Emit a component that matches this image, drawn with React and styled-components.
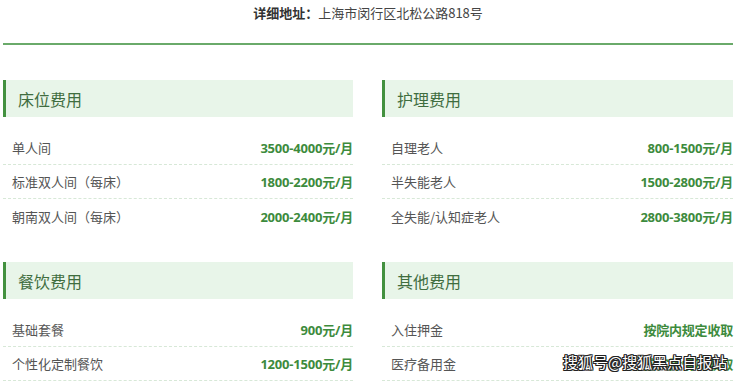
import React from 'react'
import styled, { createGlobalStyle } from 'styled-components'

const GlobalStyle = createGlobalStyle`
    html, body {
        margin: 0;
        padding: 0;
        background: #ffffff;
        font-family: "Noto Sans CJK SC", "Noto Sans", sans-serif;
    }
`

const Page = styled.div`
    position: relative;
    width: 740px;
    height: 381px;
    padding: 0 7px 0 3px;
    box-sizing: border-box;
    overflow: hidden;
`
const Address = styled.div`
    height: 43px;
    padding-top: 3px;
    box-sizing: border-box;
    text-align: center;
    font-size: 13px;
    line-height: 20px;
    color: #444;
    b {
        color: #333;
        font-weight: 700;
    }
`
const Divider = styled.div`
    height: 2px;
    background: #6aaa6a;
`
const Grid = styled.div`
    display: grid;
    grid-template-columns: 350px 351px;
    column-gap: 29px;
    row-gap: 29px;
    margin-top: 35px;
`
const SectionHeader = styled.div`
    height: 37px;
    display: flex;
    align-items: center;
    padding-left: 12px;
    background: #e8f5e9;
    border-left: 3px solid #43913f;
    font-size: 16px;
    color: #3f6d3f;
`
const Rows = styled.div`
    margin-top: 14px;
`
const Row = styled.div`
    height: 34px;
    display: flex;
    align-items: center;
    justify-content: space-between;
    padding-left: 9px;
    box-sizing: border-box;
    border-bottom: ${props => props.last ? 'none' : '1px dashed #d7e8d7'};
`
const Label = styled.span`
    font-size: 13px;
    color: #555;
`
const Value = styled.span`
    font-family: "Open Sans", "Noto Sans CJK SC", sans-serif;
    font-size: 13px;
    font-weight: 700;
    color: #3d8b3d;
    letter-spacing: -0.2px;
`
const Watermark = styled.div`
    position: absolute;
    left: 563px;
    top: 350px;
    white-space: nowrap;
    font-size: 15px;
    line-height: 24px;
    color: #fff;
    text-shadow: 1px 0 0 #222, -1px 0 0 #222, 0 1px 0 #222, 0 -1px 0 #222,
        1px 1px 0 #222, -1px -1px 0 #222, 1px -1px 0 #222, -1px 1px 0 #222;
`

const sections = [
    { title: '床位费用', rows: [['单人间', '3500-4000元/月'], ['标准双人间（每床）', '1800-2200元/月'], ['朝南双人间（每床）', '2000-2400元/月']] },
    { title: '护理费用', rows: [['自理老人', '800-1500元/月'], ['半失能老人', '1500-2800元/月'], ['全失能/认知症老人', '2800-3800元/月']] },
    { title: '餐饮费用', rows: [['基础套餐', '900元/月'], ['个性化定制餐饮', '1200-1500元/月']] },
    { title: '其他费用', rows: [['入住押金', '按院内规定收取'], ['医疗备用金', '按实际情况收取']] },
]

export default function App() {
    return (
        <Page>
            <GlobalStyle />
            <Address><b>详细地址：</b>上海市闵行区北松公路818号</Address>
            <Divider />
            <Grid>
                {sections.map((section, i) => (
                    <div key={i}>
                        <SectionHeader>{section.title}</SectionHeader>
                        <Rows>
                            {section.rows.map((row, j) => (
                                <Row key={j} last={j === section.rows.length - 1 && i < 2}>
                                    <Label>{row[0]}</Label>
                                    <Value>{row[1]}</Value>
                                </Row>
                            ))}
                        </Rows>
                    </div>
                ))}
            </Grid>
            <Watermark>搜狐号@搜狐黑点自报站</Watermark>
        </Page>
    )
}
